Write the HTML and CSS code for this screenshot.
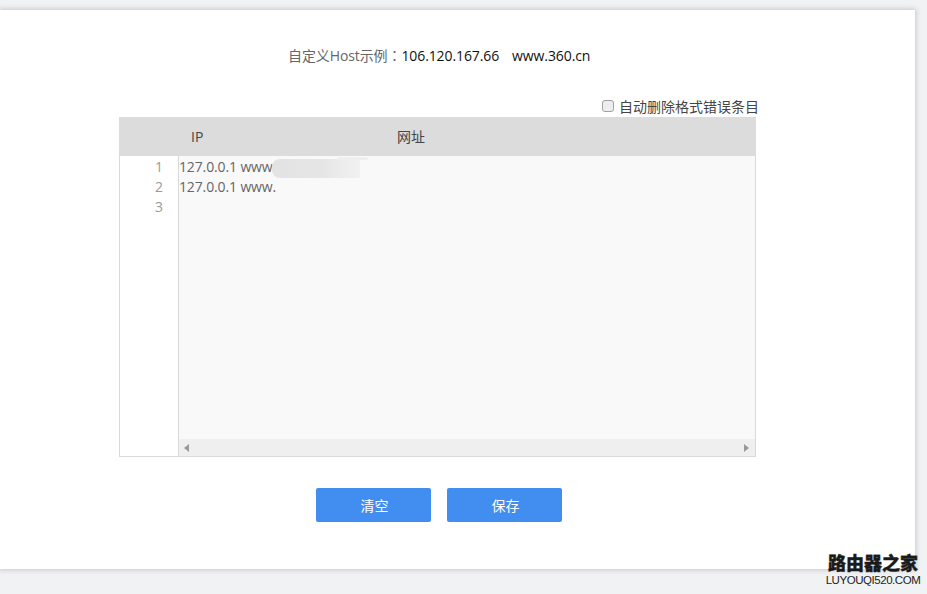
FILE: index.html
```html
<!DOCTYPE html>
<html lang="zh-CN">
<head>
<meta charset="utf-8">
<title>自定义Host</title>
<link rel="stylesheet" href="styles.css">
</head>
<body>
<main class="card">
  <p class="example"><span class="example-label">自定义Host示例<span class="colon" lang="zh-TW">：</span></span><span class="example-value">106.120.167.66</span><span class="example-value example-host">www.360.cn</span></p>
  <div class="panel">
    <label class="auto-delete"><span class="check"></span>自动删除格式错误条目</label>
    <div class="table-head"><span class="head-ip">IP</span><span class="head-url">网址</span></div>
    <div class="editor">
      <div class="gutter"><div>1</div><div>2</div><div>3</div></div>
      <div class="code">
        <div class="lines">
          <div class="line">127.0.0.1 www<span class="smudge"></span></div>
          <div class="line">127.0.0.1 www.</div>
        </div>
        <div class="scrollbar">
          <svg class="arrow" width="5" height="8" viewBox="0 0 5 8"><path d="M5 0V8L0 4Z"/></svg>
          <svg class="arrow" width="5" height="8" viewBox="0 0 5 8"><path d="M0 0V8L5 4Z"/></svg>
        </div>
      </div>
    </div>
  </div>
  <div class="actions">
    <button class="btn">清空</button>
    <button class="btn">保存</button>
  </div>
</main>
<div class="watermark">
  <div class="wm-cn">路由器之家</div>
  <div class="wm-en">LUYOUQI520.COM</div>
</div>
</body>
</html>
```
FILE: styles.css
```css
* { box-sizing: border-box; }
html, body { margin: 0; height: 100%; }
body {
  background: #f1f2f4;
  font-family: "Open Sans", "Noto Sans CJK SC", sans-serif;
  font-size: 14px;
  overflow: hidden;
  position: relative;
}
.card {
  width: 915px;
  height: 559px;
  margin-top: 10px;
  background: #fff;
  box-shadow: 0 0 5px 1px #c6c6c6;
  display: flex;
  flex-direction: column;
  align-items: flex-start;
}
.example {
  margin: 35px 0 0 288px;
  height: 20px;
  line-height: 20px;
  white-space: nowrap;
  letter-spacing: -0.1px;
}
.example-label { color: #666; }
.colon { font-family: "Noto Sans CJK TC", sans-serif; }
.example-value { color: #111; }
.example-host { margin-left: 13px; }
.panel {
  margin: 32px 0 0 119px;
  width: 637px;
  display: flex;
  flex-direction: column;
}
.auto-delete {
  align-self: flex-end;
  margin-right: -3px;
  height: 20px;
  padding-bottom: 2px;
  display: flex;
  align-items: center;
  color: #444;
  font-size: 14px;
  white-space: nowrap;
}
.check {
  width: 12px;
  height: 12px;
  margin-right: 5px;
  border: 1px solid #a0a0a0;
  border-radius: 3px;
  background: #eeeeee;
}
.table-head {
  height: 39px;
  padding-bottom: 1px;
  background: #dcdcdc;
  display: flex;
  align-items: center;
  color: #444;
}
.head-ip { margin-left: 72px; width: 206px; }
.editor {
  height: 301px;
  display: flex;
  border: 1px solid #d9d9d9;
  border-top: 0;
}
.gutter {
  width: 59px;
  flex: none;
  border-right: 1px solid #d9d9d9;
  padding: 1px 15px 0 0;
  text-align: right;
  color: #9a9a9a;
  line-height: 20px;
}
.code {
  flex: 1;
  background: #f9f9f9;
  display: flex;
  flex-direction: column;
}
.lines {
  flex: 1;
  padding-top: 1px;
  color: #666;
  line-height: 20px;
  letter-spacing: -0.13px;
}
.line { position: relative; white-space: nowrap; }
.smudge {
  position: absolute;
  left: 93px;
  top: 2px;
  width: 88px;
  height: 19px;
  background: linear-gradient(90deg, #e3e3e3, #e6e6e6 60%, #ececec 78%, #f1f1f1 100%);
  border-radius: 8px 0 2px 8px;
}
.smudge::after {
  content: "";
  position: absolute;
  left: 66px;
  top: -2px;
  width: 30px;
  height: 3px;
  background: #efefef;
  border-radius: 0 3px 3px 0;
}
.scrollbar {
  height: 17px;
  background: #efefef;
  display: flex;
  justify-content: space-between;
  align-items: center;
  padding: 0 6px 0 5px;
}
.arrow { fill: #999; }
.actions {
  margin: 31px 0 0 316px;
  display: flex;
  gap: 16px;
}
.btn {
  width: 115px;
  height: 34px;
  border: 0;
  border-radius: 2px;
  background: #428df0;
  color: #fff;
  font: inherit;
  padding: 0 0 0 2px;
}
.watermark {
  position: absolute;
  left: 824px;
  top: 551px;
  width: 98px;
  text-align: center;
}
.wm-cn {
  font-family: "Noto Sans CJK SC", sans-serif;
  font-weight: 900;
  font-size: 18px;
  line-height: 23px;
  color: #1a1a1a;
  -webkit-text-stroke: 0.4px #1a1a1a;
  white-space: nowrap;
}
.wm-en {
  font-family: "Liberation Sans", sans-serif;
  font-size: 11.5px;
  line-height: 13px;
  letter-spacing: -0.45px;
  color: #222;
  white-space: nowrap;
}
```
